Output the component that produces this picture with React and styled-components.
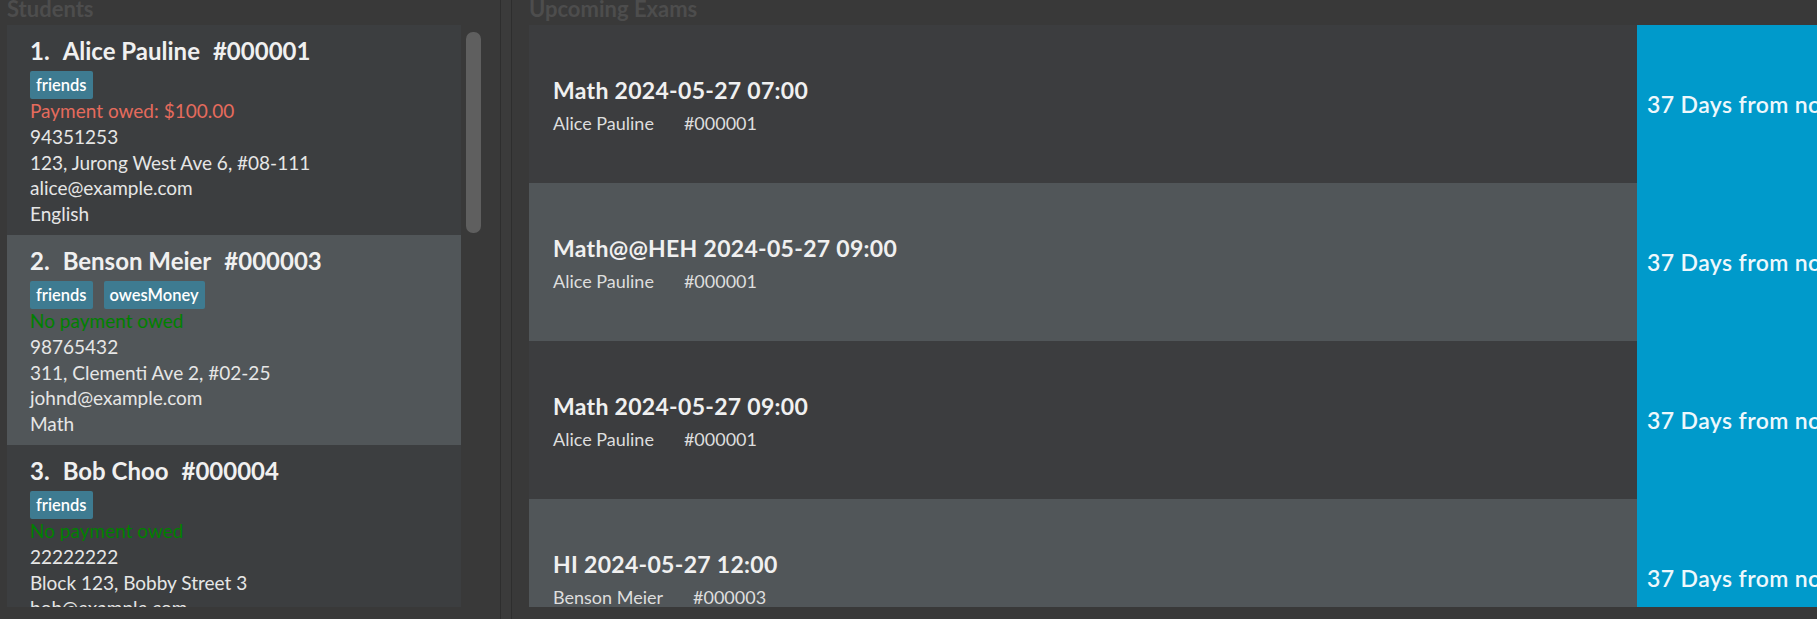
import React from "react";
import styled, { createGlobalStyle } from "styled-components";

const Global = createGlobalStyle`
  html, body { margin: 0; padding: 0; background: #393939; overflow: hidden; }
  body { font-family: "Lato", "Open Sans", sans-serif; }
  #root { height: 619px; }
`;

const Layout = styled.div`
  display: flex;
  height: 619px;
  width: 1817px;
  overflow: hidden;
  background: #393939;
`;

const LeftPane = styled.section`
  flex: 0 0 500px;
  box-sizing: border-box;
  padding: 0 19px 0 7px;
  display: flex;
  flex-direction: column;
`;

const PaneTitle = styled.div`
  height: 25px;
  font-size: 22px;
  line-height: 18px;
  font-weight: 700;
  color: #4d4d4d;
  white-space: nowrap;
`;

const ListArea = styled.div`
  display: flex;
  gap: 5px;
  height: 582px;
`;

const CardList = styled.div`
  flex: 0 0 454px;
  height: 582px;
  overflow: hidden;
  display: flex;
  flex-direction: column;
`;

const ScrollTrack = styled.div`
  flex: 0 0 15px;
  display: flex;
  flex-direction: column;
`;

const Thumb = styled.div`
  margin-top: 7px;
  height: 201px;
  border-radius: 7px;
  background: #5f5f5f;
`;

const Card = styled.div`
  flex: 0 0 210px;
  box-sizing: border-box;
  padding: 10px 0 0 23px;
  background: ${(p) => (p.$alt ? "#515659" : "#3c3e40")};
  display: flex;
  flex-direction: column;
`;

const NameLine = styled.div`
  display: flex;
  gap: 13px;
  font-size: 24px;
  line-height: 32px;
  font-weight: 700;
  color: #f0f0f0;
  white-space: nowrap;
`;

const TagRow = styled.div`
  display: flex;
  gap: 11px;
  margin-top: 4px;
  margin-bottom: -1px;
`;

const Tag = styled.span`
  height: 28px;
  box-sizing: border-box;
  padding: 0 6px;
  border-radius: 2px;
  background: #3e7b91;
  color: #ffffff;
  font-size: 16.5px;
  line-height: 28px;
  font-weight: 600;
`;

const Detail = styled.div`
  font-size: 19px;
  line-height: 25.75px;
  color: ${(p) => p.$color || "#e6e6e6"};
  white-space: nowrap;
`;

const Divider = styled.div`
  flex: 0 0 12px;
  box-sizing: border-box;
  border-left: 1px solid #2e2e2e;
  border-right: 1px solid #2e2e2e;
  background: #3b3b3b;
`;

const RightPane = styled.section`
  flex: 1 1 auto;
  min-width: 0;
  padding-left: 17px;
  display: flex;
  flex-direction: column;
  overflow: hidden;
`;

const ExamList = styled.div`
  height: 582px;
  overflow: hidden;
  display: flex;
  flex-direction: column;
`;

const ExamRow = styled.div`
  flex: 0 0 158px;
  display: flex;
  background: ${(p) => (p.$alt ? "#515659" : "#3c3d3f")};
`;

const ExamInfo = styled.div`
  flex: 0 0 1108px;
  box-sizing: border-box;
  padding: 4px 0 0 24px;
  display: flex;
  flex-direction: column;
  justify-content: center;
`;

const ExamTitle = styled.div`
  font-size: 23px;
  line-height: 28px;
  letter-spacing: 0.3px;
  font-weight: 700;
  color: #f0f0f0;
  white-space: nowrap;
`;

const ExamStudent = styled.div`
  display: flex;
  gap: 30px;
  margin-top: 6px;
  font-size: 18px;
  line-height: 26px;
  color: #dedede;
  white-space: nowrap;
`;

const Countdown = styled.div`
  flex: 0 0 300px;
  box-sizing: border-box;
  padding-left: 10px;
  display: flex;
  align-items: center;
  background: #009acb;
  color: #eef8fc;
  font-size: 23px;
  letter-spacing: 0.4px;
  font-weight: 600;
  white-space: nowrap;
`;

const students = [
  {
    idx: "1.",
    name: "Alice Pauline",
    id: "#000001",
    tags: ["friends"],
    owed: "Payment owed: $100.00",
    paid: false,
    phone: "94351253",
    address: "123, Jurong West Ave 6, #08-111",
    email: "alice@example.com",
    subject: "English",
  },
  {
    idx: "2.",
    name: "Benson Meier",
    id: "#000003",
    tags: ["friends", "owesMoney"],
    owed: "No payment owed",
    paid: true,
    phone: "98765432",
    address: "311, Clementi Ave 2, #02-25",
    email: "johnd@example.com",
    subject: "Math",
  },
  {
    idx: "3.",
    name: "Bob Choo",
    id: "#000004",
    tags: ["friends"],
    owed: "No payment owed",
    paid: true,
    phone: "22222222",
    address: "Block 123, Bobby Street 3",
    email: "bob@example.com",
    subject: "Science",
  },
];

const exams = [
  { title: "Math 2024-05-27 07:00", name: "Alice Pauline", id: "#000001" },
  { title: "Math@@HEH 2024-05-27 09:00", name: "Alice Pauline", id: "#000001" },
  { title: "Math 2024-05-27 09:00", name: "Alice Pauline", id: "#000001" },
  { title: "HI 2024-05-27 12:00", name: "Benson Meier", id: "#000003" },
];

export default function App() {
  return (
    <>
      <Global />
      <Layout>
        <LeftPane>
          <PaneTitle>Students</PaneTitle>
          <ListArea>
            <CardList>
              {students.map((s, i) => (
                <Card key={s.id} $alt={i % 2 === 1}>
                  <NameLine>
                    <span>{s.idx}</span>
                    <span>{s.name}</span>
                    <span>{s.id}</span>
                  </NameLine>
                  <TagRow>
                    {s.tags.map((t) => (
                      <Tag key={t}>{t}</Tag>
                    ))}
                  </TagRow>
                  <Detail $color={s.paid ? "#008000" : "#e56b5d"}>{s.owed}</Detail>
                  <Detail>{s.phone}</Detail>
                  <Detail>{s.address}</Detail>
                  <Detail>{s.email}</Detail>
                  <Detail>{s.subject}</Detail>
                </Card>
              ))}
            </CardList>
            <ScrollTrack>
              <Thumb />
            </ScrollTrack>
          </ListArea>
        </LeftPane>
        <Divider />
        <RightPane>
          <PaneTitle>Upcoming Exams</PaneTitle>
          <ExamList>
            {exams.map((e, i) => (
              <ExamRow key={i} $alt={i % 2 === 1}>
                <ExamInfo>
                  <ExamTitle>{e.title}</ExamTitle>
                  <ExamStudent>
                    <span>{e.name}</span>
                    <span>{e.id}</span>
                  </ExamStudent>
                </ExamInfo>
                <Countdown>37 Days from now</Countdown>
              </ExamRow>
            ))}
          </ExamList>
        </RightPane>
      </Layout>
    </>
  );
}
